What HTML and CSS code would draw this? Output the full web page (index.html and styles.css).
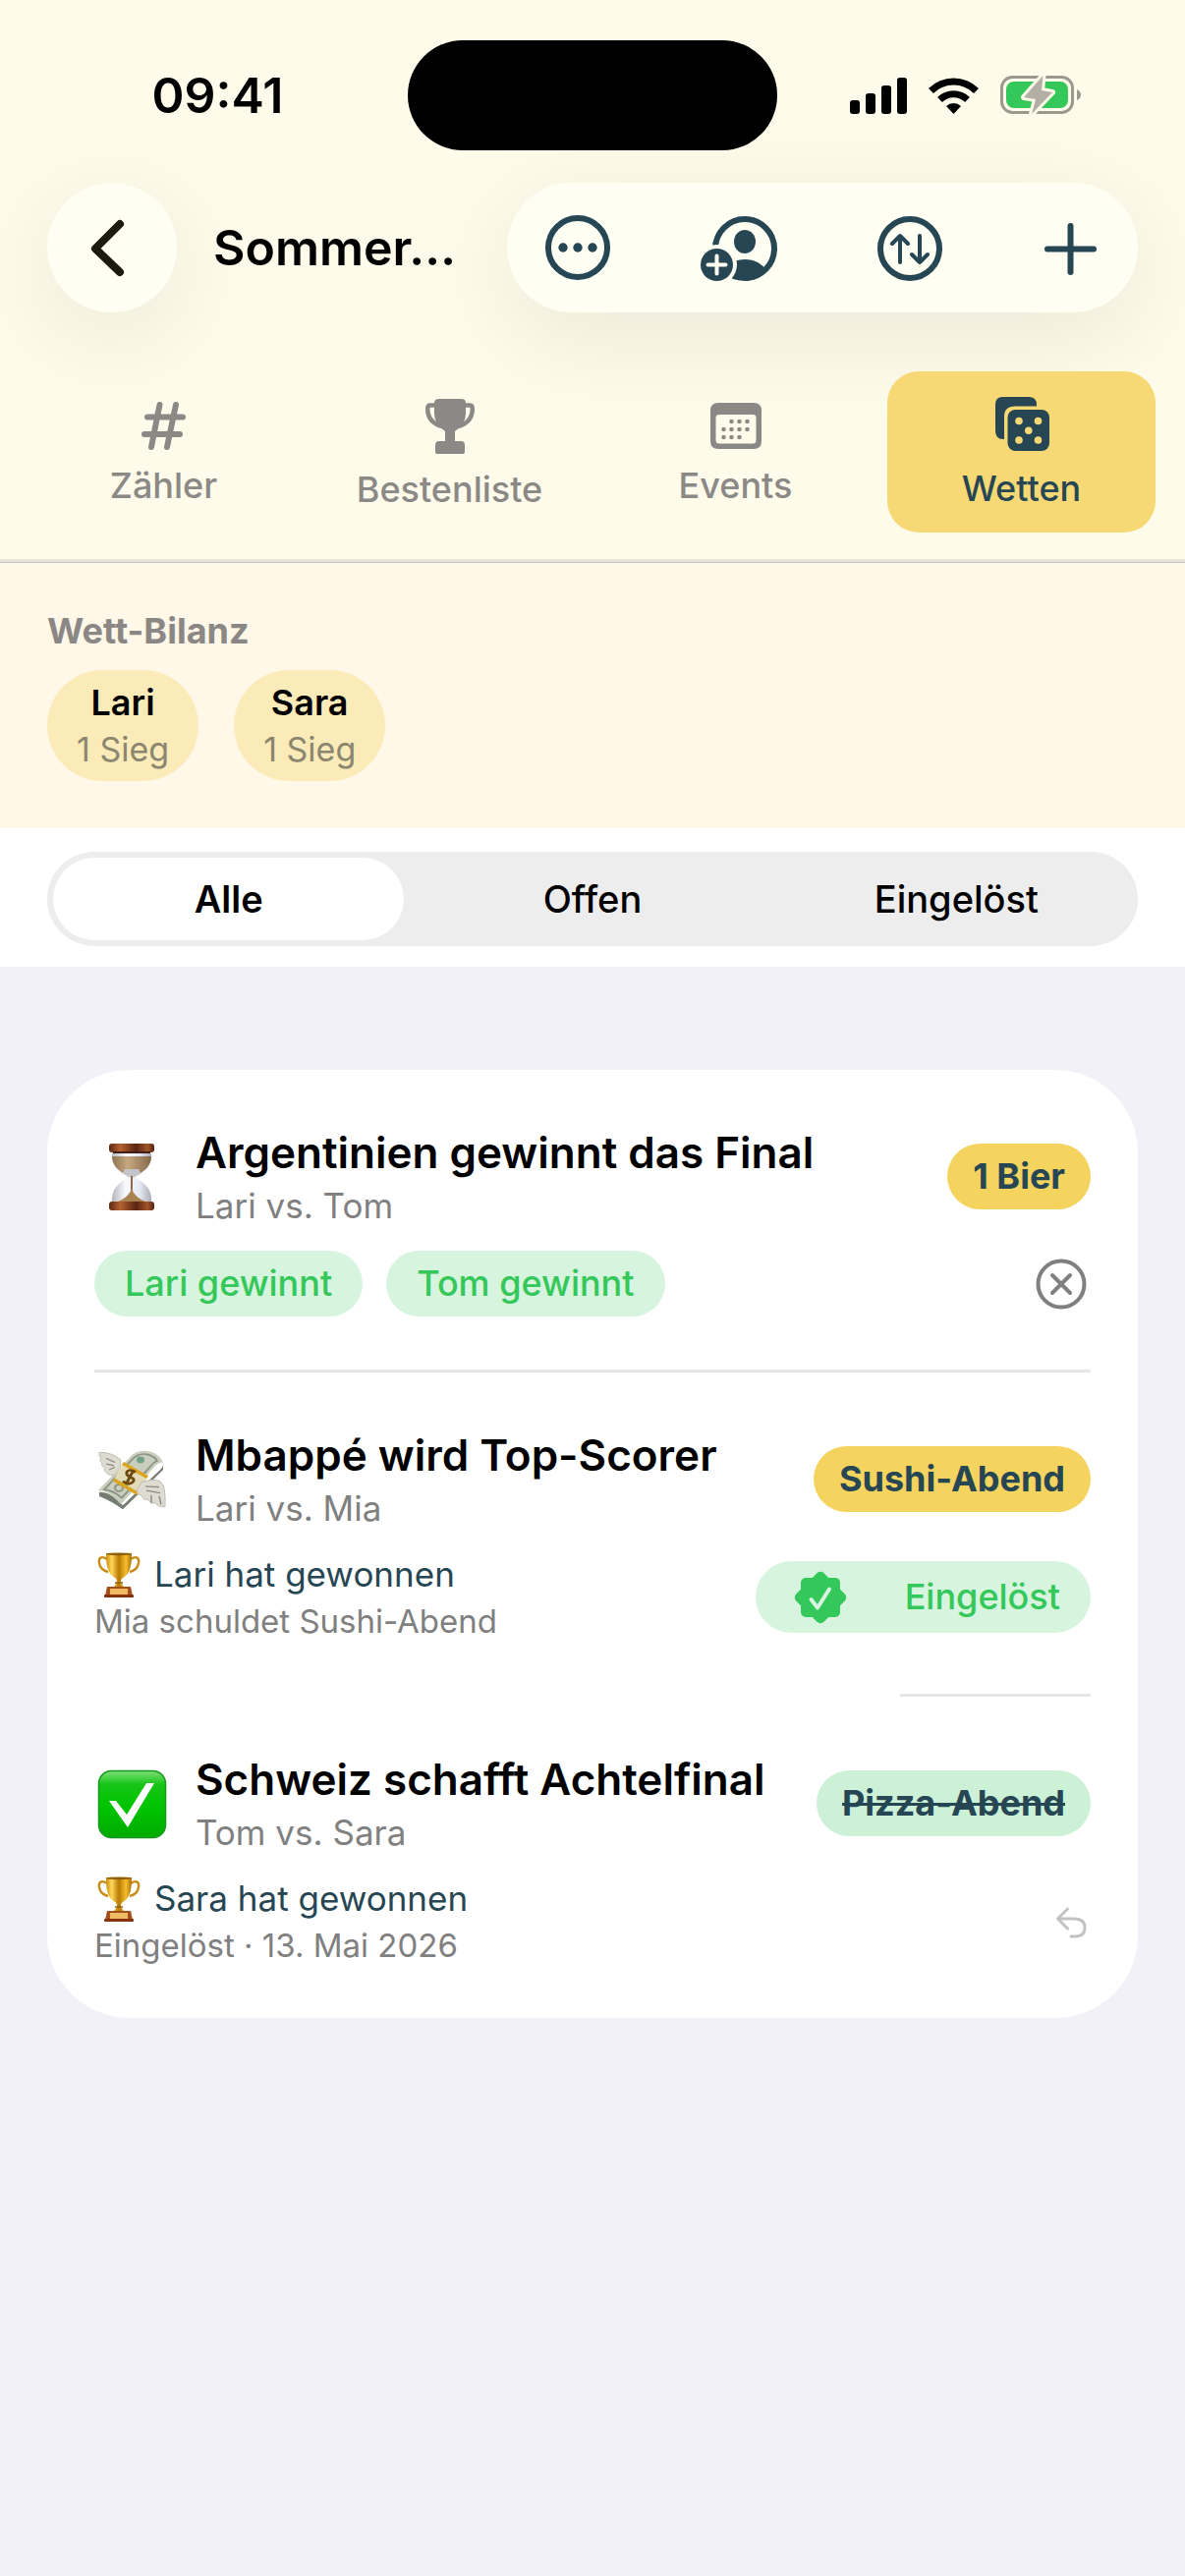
FILE: index.html
```html
<!DOCTYPE html>
<html lang="de">
<head>
    <meta charset="UTF-8">
    <meta name="viewport" content="width=device-width, initial-scale=1.0">
    <title>Wetten</title>
    <link rel="stylesheet" href="styles.css">
</head>
<body>

    <!-- shared shapes -->
    <svg class="defs" width="0" height="0" aria-hidden="true">
        <defs>
            <linearGradient id="gold" x1="0" x2="1" y1="0" y2="0">
                <stop offset="0" stop-color="#c98a08"/>
                <stop offset="0.22" stop-color="#ffd95a"/>
                <stop offset="0.5" stop-color="#b87a06"/>
                <stop offset="0.78" stop-color="#f6be2c"/>
                <stop offset="1" stop-color="#a86a04"/>
            </linearGradient>
            <linearGradient id="wood" x1="0" x2="1" y1="0" y2="0">
                <stop offset="0" stop-color="#5d2714"/>
                <stop offset="0.25" stop-color="#b5622f"/>
                <stop offset="0.6" stop-color="#5a2411"/>
                <stop offset="0.85" stop-color="#a3562a"/>
                <stop offset="1" stop-color="#542010"/>
            </linearGradient>
            <linearGradient id="glass" x1="0" x2="1" y1="0" y2="0">
                <stop offset="0" stop-color="#b3b6bd"/>
                <stop offset="0.35" stop-color="#fafbff"/>
                <stop offset="0.7" stop-color="#e6e9f4"/>
                <stop offset="1" stop-color="#a9acb4"/>
            </linearGradient>
            <linearGradient id="sand" x1="0" x2="1" y1="0" y2="0">
                <stop offset="0" stop-color="#8f7452"/>
                <stop offset="0.4" stop-color="#c6a87f"/>
                <stop offset="1" stop-color="#84694a"/>
            </linearGradient>
            <linearGradient id="green" x1="0" x2="0" y1="0" y2="1">
                <stop offset="0" stop-color="#7fe07a"/>
                <stop offset="0.2" stop-color="#17c417"/>
                <stop offset="0.55" stop-color="#00c400"/>
                <stop offset="1" stop-color="#00aa00"/>
            </linearGradient>
            <symbol id="cup" viewBox="0 0 44 46">
                <path d="M10 7C4 3 1 6 2 11c1 6 5 8 9 9M34 7c6-4 9-1 8 4-1 6-5 8-9 9" fill="none" stroke="#c98d17" stroke-width="2.4"/>
                <path d="M9 1h26c0 14-2 21-9 25-2 1-2 3-2 5l3 4H17l3-4c0-2 0-4-2-5C11 22 9 15 9 1z" fill="url(#gold)"/>
                <ellipse cx="22" cy="1.8" rx="13" ry="1.4" fill="#8e5f09"/>
                <path d="M18 31h8" stroke="#8e5f09" stroke-width="1.5"/>
                <path d="M10 35h24l2 9H8z" fill="#a4501c"/>
                <path d="M13 37h18v6H13z" fill="#f0bb62"/>
                <rect x="7" y="43" width="30" height="3" rx="1" fill="#86320f"/>
            </symbol>
        </defs>
    </svg>

    <header class="top">
        <div class="status">
            <span class="time">09:41</span>
            <div class="island"></div>
            <div class="status-icons">
                <svg width="58" height="37" viewBox="0 0 58 37" aria-hidden="true">
                    <rect x="0" y="23" width="10" height="14" rx="3"/>
                    <rect x="16" y="16" width="10" height="21" rx="3"/>
                    <rect x="32" y="8" width="10" height="29" rx="3"/>
                    <rect x="48" y="0" width="10" height="37" rx="3"/>
                </svg>
                <svg width="51" height="37" viewBox="0 0 51 37" aria-hidden="true">
                    <path d="M2.500 13.500A32.500 32.500 0 0 1 48.500 13.500M11.500 22.500A20 20 0 0 1 39.500 22.500" fill="none" stroke="#000" stroke-width="7"/>
                    <path d="M25.500 37L18 29A11 11 0 0 1 33 29z"/>
                </svg>
                <svg width="82" height="40" viewBox="0 0 82 40" aria-hidden="true">
                    <rect x="1.500" y="1.500" width="72" height="36" rx="11" fill="none" stroke="#9b988d" stroke-width="3"/>
                    <path d="M78 14q4 2 4 5.500t-4 5.500z" fill="#9b988d"/>
                    <rect x="6" y="6" width="63" height="27" rx="8" fill="#34c759"/>
                    <path d="M43.500 0L24 22L36 24L32 39L53 17L42 15z" fill="#b3afa4" stroke="#fffbeb" stroke-width="6" stroke-linejoin="round" paint-order="stroke"/>
                </svg>
            </div>
        </div>

        <div class="navbar">
            <button class="back" aria-label="Zurück">
                <svg width="132" height="132" viewBox="0 0 132 132" aria-hidden="true">
                    <path d="M74 42L49 67L74 91" fill="none" stroke="#1c1a0e" stroke-width="8" stroke-linecap="round" stroke-linejoin="round"/>
                </svg>
            </button>
            <h1 class="title">Sommer…</h1>
            <div class="toolbar">
                <button class="tool" aria-label="Mehr">
                    <svg width="84" height="84" viewBox="0 0 84 84" aria-hidden="true">
                        <circle cx="42" cy="42" r="30" fill="none" stroke="#264653" stroke-width="6"/>
                        <circle cx="27" cy="42" r="4.700" fill="#264653"/>
                        <circle cx="42" cy="42" r="4.700" fill="#264653"/>
                        <circle cx="57" cy="42" r="4.700" fill="#264653"/>
                    </svg>
                </button>
                <button class="tool" aria-label="Person hinzufügen">
                    <svg width="84" height="84" viewBox="0 0 84 84" aria-hidden="true">
                        <clipPath id="disc"><circle cx="45" cy="43" r="32"/></clipPath>
                        <circle cx="45" cy="43" r="30" fill="none" stroke="#264653" stroke-width="6"/>
                        <ellipse cx="45" cy="36" rx="11" ry="12" fill="#264653"/>
                        <ellipse cx="45" cy="75" rx="25" ry="21" fill="#264653" clip-path="url(#disc)"/>
                        <circle cx="16.500" cy="59.500" r="20.500" fill="#fffef2"/>
                        <circle cx="16.500" cy="59.500" r="16.500" fill="#264653"/>
                        <path d="M16.500 50.500v18M7.500 59.500h18" stroke="#fffef2" stroke-width="4" stroke-linecap="round"/>
                    </svg>
                </button>
                <button class="tool" aria-label="Sortieren">
                    <svg width="84" height="84" viewBox="0 0 84 84" aria-hidden="true">
                        <g fill="none" stroke="#264653" stroke-linecap="round" stroke-linejoin="round">
                            <circle cx="45" cy="43" r="30" stroke-width="6"/>
                            <path d="M35 57V30M27 38l8-8 8 8M55 30v27M47 49l8 8 8-8" stroke-width="4"/>
                        </g>
                    </svg>
                </button>
                <button class="tool" aria-label="Hinzufügen">
                    <svg width="84" height="84" viewBox="0 0 84 84" aria-hidden="true">
                        <path d="M41.500 20v47M18 43.500h47" stroke="#264653" stroke-width="6" stroke-linecap="round"/>
                    </svg>
                </button>
            </div>
        </div>

        <nav class="tabs">
            <button class="tab">
                <svg width="46" height="52" viewBox="0 0 46 52" aria-hidden="true">
                    <path d="M18.500 7L10 50M35 7L26 50M6 19.500H42M3 37H39" stroke="#8a8985" stroke-width="6" stroke-linecap="round"/>
                </svg>
                Zähler
            </button>
            <button class="tab">
                <svg width="52" height="60" viewBox="0 0 52 60" aria-hidden="true">
                    <path d="M10 9Q10 5 15 5H37Q42 5 42 9V20Q42 31 31 38V48H37Q41 48 41 52V59Q41 61 39 61H13Q11 61 11 59V52Q11 48 15 48H21V38Q10 31 10 20z" fill="#8a8985"/>
                    <path d="M12 11.500H6Q3.200 11.500 3.200 15Q3.200 29 18 33M40 11.500H46Q48.800 11.500 48.800 15Q48.800 29 34 33" fill="none" stroke="#8a8985" stroke-width="4.500"/>
                </svg>
                Bestenliste
            </button>
            <button class="tab">
                <svg width="52" height="52" viewBox="0 0 52 52" aria-hidden="true">
                    <path fill-rule="evenodd" d="M8 5H44Q52 5 52 13V44Q52 52 44 52H8Q0 52 0 44V13Q0 5 8 5zM9 17Q5.500 17 5.500 20V43Q5.500 46.500 9 46.500H43Q46.500 46.500 46.500 43V20Q46.500 17 43 17z" fill="#8a8985"/>
                    <path d="M21.500 24h0M29.500 24h0M37.500 24h0M13.500 32h0M21.500 32h0M29.500 32h0M37.500 32h0M13.500 40h0M21.500 40h0M29.500 40h0" stroke="#8a8985" stroke-width="4.500" stroke-linecap="round"/>
                </svg>
                Events
            </button>
            <button class="tab active">
                <svg width="56" height="58" viewBox="0 0 56 58" aria-hidden="true">
                    <path d="M9 2H35Q43 2 43 10V11.500H21Q10 11.500 10 22V45H9Q1 45 1 36V10Q1 2 9 2z" fill="#264653"/>
                    <rect x="13.500" y="15" width="42.500" height="42" rx="8" fill="#264653"/>
                    <g fill="#f6d974">
                        <circle cx="25" cy="26.500" r="3.800"/>
                        <circle cx="44.500" cy="26.500" r="3.800"/>
                        <circle cx="34.800" cy="36.200" r="3.800"/>
                        <circle cx="25" cy="46" r="3.800"/>
                        <circle cx="44.500" cy="46" r="3.800"/>
                    </g>
                </svg>
                Wetten
            </button>
        </nav>
    </header>

    <section class="balance">
        <h2>Wett-Bilanz</h2>
        <div class="players">
            <div class="player">
                <strong>Lari</strong>
                <span>1 Sieg</span>
            </div>
            <div class="player">
                <strong>Sara</strong>
                <span>1 Sieg</span>
            </div>
        </div>
    </section>

    <div class="filter">
        <div class="segments">
            <label class="segment"><input type="radio" name="filter" checked>Alle</label>
            <label class="segment"><input type="radio" name="filter">Offen</label>
            <label class="segment"><input type="radio" name="filter">Eingelöst</label>
        </div>
    </div>

    <main class="bets">
        <article class="bet">
            <div class="bet-head">
                <svg class="emoji" width="76" height="76" viewBox="0 0 76 76" aria-hidden="true">
                    <path d="M18 14h40c0 12-5 18-18 25h-4C23 32 18 26 18 14z" fill="url(#glass)"/>
                    <path d="M18 17h40c0 9-6 15-18 21h-4C24 32 18 26 18 17z" fill="url(#sand)"/>
                    <path d="M31 30h14l2 4-7 5h-4l-7-5z" fill="#c4c5ca"/>
                    <path d="M36 38h4c14 7 19 14 18 27H18c-1-13 4-20 18-27z" fill="url(#glass)"/>
                    <path d="M38 37v17" stroke="#8b6a45" stroke-width="2"/>
                    <path d="M38 50q3 9 16 14H22q13-5 16-14z" fill="#a98352"/>
                    <rect x="15" y="4" width="46" height="9" rx="3" fill="url(#wood)"/>
                    <path d="M19 13h38" stroke="#3f2016" stroke-width="2"/>
                    <rect x="15" y="63" width="46" height="9" rx="3" fill="url(#wood)"/>
                </svg>
                <div class="bet-text">
                    <h3>Argentinien gewinnt das Final</h3>
                    <p>Lari vs. Tom</p>
                </div>
                <span class="stake">1 Bier</span>
            </div>
            <div class="bet-foot">
                <button class="win">Lari gewinnt</button>
                <button class="win">Tom gewinnt</button>
                <button class="icon-btn" aria-label="Wette löschen">
                    <svg width="60" height="60" viewBox="0 0 60 60" aria-hidden="true">
                        <g fill="none" stroke="#808080" stroke-width="4" stroke-linecap="round">
                            <circle cx="30" cy="30" r="23.500"/>
                            <path d="M21 21l18 18M39 21l-18 18"/>
                        </g>
                    </svg>
                </button>
            </div>
        </article>
        <hr>

        <article class="bet">
            <div class="bet-head">
                <svg class="emoji" width="76" height="76" viewBox="0 0 76 76" aria-hidden="true">
                    <g transform="translate(0 2) scale(1 0.84)">
                        <path d="M5 10q12-1 22 9l-1 12q-5 8-11 6-6-4-4-8-5-3-3-6-4-4-1-6-3-4-2-7z" fill="#dedcd2" stroke="#bdbaad"/>
                        <path d="M12 17l9 5M12 24l8 2M15 31l6-3" stroke="#8e8c82" stroke-width="1.5"/>
                        <path d="M5 58q11-1 24 16L66 32q5-5 4-10V31L29 79Q19 70 5 63z" fill="#757c72"/>
                        <path d="M4 56L36 16Q42 7 52 8q13 1 18 14-6 0-10 7L27 73Q16 57 4 56z" fill="#c9cebd"/>
                        <path d="M10 55L38 19Q44 11 52 12q8 1 12 8-4 2-7 7L28 65Q19 56 10 55z" fill="none" stroke="#8d9485" stroke-width="2"/>
                        <circle cx="47" cy="19" r="4" fill="#72a287"/>
                        <circle cx="25" cy="53" r="4" fill="none" stroke="#8d9485" stroke-width="2"/>
                        <path d="M29 23L54 40L44 60L20 43z" fill="#e3dcb9"/>
                        <path d="M29 23L54 40M20 43L44 60" stroke="#dba51f" stroke-width="4"/>
                        <path d="M42 34q-7-5-9 0-1 4 4 6t2 6q-4 4-10-1M40 31L32 49" fill="none" stroke="#6e4a0c" stroke-width="3"/>
                        <path d="M48 46q13-5 19-1 6 4 5 31-6 1-10-5-5 2-7-4-6 1-7-5-6-1-4-8z" fill="#dedcd2" stroke="#bdbaad"/>
                        <path d="M52 51l14 1M53 56l14 3M58 62v9M66 63l2 10" stroke="#8e8c82" stroke-width="1.5"/>
                    </g>
                </svg>
                <div class="bet-text">
                    <h3>Mbappé wird Top-Scorer</h3>
                    <p>Lari vs. Mia</p>
                </div>
                <span class="stake">Sushi-Abend</span>
            </div>
            <div class="bet-foot">
                <div class="result">
                    <p class="winner"><svg width="44" height="46" aria-hidden="true"><use href="#cup"/></svg>Lari hat gewonnen</p>
                    <p class="note">Mia schuldet Sushi-Abend</p>
                </div>
                <button class="redeem">
                    <svg width="52" height="52" viewBox="0 0 52 52" aria-hidden="true">
                        <g fill="#34c759">
                            <rect x="6" y="6" width="40" height="40" rx="5"/>
                            <rect x="6" y="6" width="40" height="40" rx="5" transform="rotate(45 26 26)"/>
                        </g>
                        <path d="M16.500 28l6.500 8.500L35 17.500" fill="none" stroke="#d7f4de" stroke-width="4" stroke-linecap="round" stroke-linejoin="round"/>
                    </svg>
                    Eingelöst
                </button>
            </div>
        </article>
        <hr class="short">

        <article class="bet">
            <div class="bet-head">
                <svg class="emoji" width="76" height="76" viewBox="0 0 76 76" aria-hidden="true">
                    <rect x="4.500" y="4.500" width="68" height="68" rx="13" fill="url(#green)" stroke="#159a1c" stroke-width="1.500"/>
                    <path d="M15 35h7l11 14L53 17h8L34 62z" fill="#fff"/>
                </svg>
                <div class="bet-text">
                    <h3>Schweiz schafft Achtelfinal</h3>
                    <p>Tom vs. Sara</p>
                </div>
                <span class="stake done">Pizza-Abend</span>
            </div>
            <div class="bet-foot">
                <div class="result">
                    <p class="winner"><svg width="44" height="46" aria-hidden="true"><use href="#cup"/></svg>Sara hat gewonnen</p>
                    <p class="note">Eingelöst · 13. Mai 2026</p>
                </div>
                <button class="icon-btn" aria-label="Rückgängig">
                    <svg width="60" height="60" viewBox="0 0 60 60" aria-hidden="true">
                        <path d="M36.500 17L26.500 27L36.500 37M27 27H43Q54 27 54 36Q54 45 44 45H40" fill="none" stroke="#c2c2c2" stroke-width="3" stroke-linecap="round" stroke-linejoin="round"/>
                    </svg>
                </button>
            </div>
        </article>
    </main>

</body>
</html>
```
FILE: styles.css
```css
* {
    box-sizing: border-box;
}

body {
    margin: 0;
    min-height: 100vh;
    background-color: #f2f1f7;
    color: #000;
    font-family: Inter, Roboto, "Liberation Sans", sans-serif;
    font-size: 36px;
    line-height: 43px;
}

h1, h2, h3, p {
    margin: 0;
}

button {
    padding: 0;
    border: none;
    background: none;
    color: inherit;
    font: inherit;
    cursor: pointer;
}

svg {
    display: block;
    flex-shrink: 0;
    overflow: visible;
}

.defs {
    position: absolute;
}

/* header */

.top {
    padding-top: 41px;
    background-color: #fffbeb;
    border-bottom: 1px solid #c2c4ca;
    box-shadow: inset 0 -3px #e8e5d8;
    overflow: hidden;
}

.status {
    display: grid;
    grid-template-columns: 1fr 376px 1fr;
    align-items: center;
    justify-items: center;
    padding: 0 28px;
}

.time {
    font-size: 50px;
    font-weight: 600;
    line-height: 60px;
}

.island {
    width: 100%;
    height: 112px;
    border-radius: 56px;
    background-color: #000;
}

.status-icons {
    display: flex;
    align-items: center;
    gap: 22px;
    margin-right: 4px;
}

.navbar {
    display: flex;
    align-items: center;
    gap: 37px;
    margin-top: 33px;
    padding: 0 48px;
}

.back,
.toolbar {
    height: 132px;
    border-radius: 66px;
    background-color: #fffef2;
    box-shadow: 0 24px 100px rgba(0, 0, 0, 0.08);
}

.back {
    flex: 0 0 132px;
}

.title {
    flex: 1;
    font-size: 50px;
    font-weight: 600;
    line-height: 60px;
    white-space: nowrap;
}

.toolbar {
    display: flex;
    flex: 0 1 642px;
    align-items: center;
    justify-content: space-between;
    padding: 0 26px 0 30px;
}

.tabs {
    display: grid;
    grid-template-columns: repeat(4, 1fr);
    gap: 18px;
    padding: 60px 30px 30px;
}

.tab {
    display: flex;
    flex-direction: column;
    align-items: center;
    justify-content: center;
    gap: 16px;
    height: 164px;
    border-radius: 32px;
    color: #8a8985;
    font-weight: 500;
}

.tab.active {
    background-color: #f6d974;
    color: #264653;
}

/* balance */

.balance {
    padding: 48px;
    background-color: #fff7e7;
}

.balance h2 {
    margin-bottom: 18px;
    color: #8a8784;
    font-size: 36px;
    font-weight: 700;
}

.players {
    display: flex;
    gap: 36px;
}

.player {
    display: flex;
    flex-direction: column;
    align-items: center;
    gap: 6px;
    padding: 12px 30px;
    border-radius: 57px;
    background-color: #faebb8;
}

.player strong {
    font-weight: 600;
}

.player span {
    color: #8b866f;
    font-size: 34px;
    line-height: 40px;
}

/* filter */

.filter {
    padding: 24px 48px 21px;
    background-color: #fff;
}

.segments {
    display: grid;
    grid-template-columns: repeat(3, 1fr);
    gap: 13px;
    height: 96px;
    padding: 6px;
    border-radius: 48px;
    background-color: #ededed;
}

.segment {
    display: flex;
    align-items: center;
    justify-content: center;
    border-radius: 42px;
    font-size: 38px;
    font-weight: 500;
    cursor: pointer;
}

.segment:has(input:checked) {
    background-color: #fff;
    font-weight: 600;
}

.segment input {
    appearance: none;
    width: 0;
    height: 0;
    margin: 0;
}

/* bets */

.bets {
    margin: 105px 48px 48px;
    padding: 0 48px;
    border-radius: 84px;
    background-color: #fff;
}

.bets hr {
    height: 3px;
    margin: 0;
    border: none;
    background-color: #e6e6e6;
}

.bets .short {
    width: 194px;
    margin-left: auto;
}

.bet {
    padding: 57px 0 54px;
}

.bet-head,
.bet-foot {
    display: flex;
    align-items: center;
}

.bet-head {
    gap: 27px;
}

.bet-text {
    flex: 1;
}

.bet-text h3 {
    margin-bottom: 6px;
    font-size: 44px;
    font-weight: 600;
    line-height: 54px;
}

.bet-text p,
.note {
    color: #808080;
}

.bet-text p,
.winner {
    font-size: 35px;
}

.stake {
    padding: 12px 26px;
    border-radius: 34px;
    background-color: #f4d35e;
    color: #264653;
    font-weight: 700;
    white-space: nowrap;
}

.stake.done {
    background-color: #ccf1d7;
    text-decoration: line-through;
}

.bet-foot {
    gap: 24px;
    margin-top: 24px;
}

.win,
.redeem {
    border-radius: 37px;
    background-color: #d7f4de;
    color: #34c759;
    font-weight: 500;
}

.win {
    height: 67px;
    padding: 0 31px;
}

.redeem {
    display: flex;
    align-items: center;
    gap: 60px;
    height: 73px;
    margin-left: auto;
    padding: 0 31px 0 40px;
}

.icon-btn {
    margin-left: auto;
}

.winner {
    display: flex;
    align-items: center;
    gap: 14px;
    height: 43px;
    padding-left: 3px;
    color: #264653;
}

.note {
    margin-top: 6px;
    font-size: 33px;
    line-height: 40px;
}
```
